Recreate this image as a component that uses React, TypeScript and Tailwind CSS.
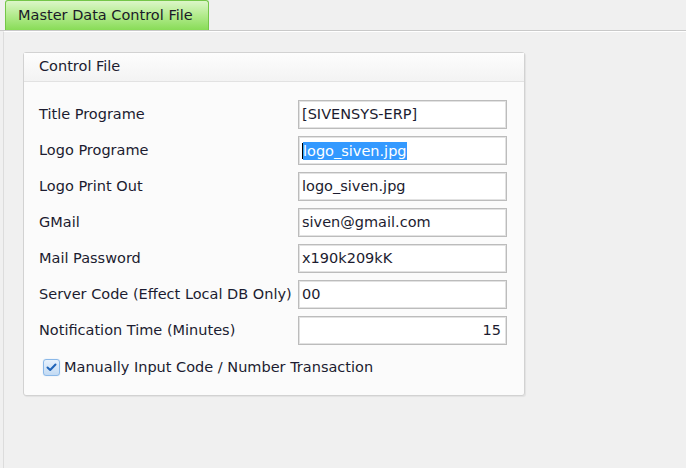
const FONT = "font-['DejaVu_Sans',Tahoma,sans-serif]";

type Row = { label: string; value: string; align?: 'right'; selected?: boolean };

const ROWS: Row[] = [
  { label: 'Title Programe', value: '[SIVENSYS-ERP]' },
  { label: 'Logo Programe', value: 'logo_siven.jpg', selected: true },
  { label: 'Logo Print Out', value: 'logo_siven.jpg' },
  { label: 'GMail', value: 'siven@gmail.com' },
  { label: 'Mail Password', value: 'x190k209kK' },
  { label: 'Server Code (Effect Local DB Only)', value: '00' },
  { label: 'Notification Time (Minutes)', value: '15', align: 'right' },
];

function Field({ row }: { row: Row }) {
  return (
    <div
      className={`w-[209px] h-[29px] bg-white border border-[#bcbcbc] shadow-[inset_0_0_0_1px_#e2e2e2] flex items-center px-[3px] text-[14.5px] text-[#1c1c30] ${
        row.align === 'right' ? 'justify-end pr-[5px]' : ''
      }`}
    >
      {row.selected ? (
        <span className="flex items-center">
          <span className="w-px h-[16px] bg-black" />
          <span className="bg-[#3399ff] text-white leading-[18px]">{row.value}</span>
        </span>
      ) : (
        <span>{row.value}</span>
      )}
    </div>
  );
}

export default function App() {
  return (
    <div className={`w-[686px] h-[468px] bg-[#f0f0f0] overflow-hidden ${FONT} text-[#1c1c30]`}>
      {/* tab strip */}
      <div className="h-[31px] flex items-end pl-[5px] border-b border-[#c9c9c9]">
        <div className="w-[204px] h-[30px] rounded-t-[3px] border border-b-0 border-[#74c648] bg-gradient-to-b from-[#dcf6c8] via-[#b2eb8c] to-[#88dc56] flex items-center pl-[12px] text-[14.5px] text-[#1a1a28]">
          Master Data Control File
        </div>
      </div>

      {/* page */}
      <div className="ml-[3px] h-[437px] border-l border-t border-[#dcdcdc] border-t-white pl-[19px] pt-[20px]">
        <div className="w-[502px] h-[344px] rounded-[3px] border border-[#d2d2d2] bg-[#fbfbfb] shadow-[1px_1px_1px_rgba(0,0,0,0.06)] flex flex-col">
          <div className="h-[29px] flex items-center pl-[15px] text-[14.5px] bg-gradient-to-b from-[#fdfdfd] to-[#f3f3f3] border-b border-[#e2e2e2]">
            Control File
          </div>
          <div className="flex flex-col gap-[7px] pt-[18px] pl-[15px]">
            {ROWS.map((r) => (
              <div key={r.label} className="flex items-center h-[29px]">
                <div className="w-[259px] text-[14.5px] whitespace-nowrap">{r.label}</div>
                <Field row={r} />
              </div>
            ))}
            <div className="flex items-center gap-[4px] mt-[5px] pl-[4px]">
              <div className="w-[17px] h-[17px] rounded-[3px] border border-[#8ab8e8] bg-gradient-to-b from-[#e8f2fd] to-[#c2daf3] shadow-[0_0_1px_#a8cdf0] flex items-center justify-center">
                <svg width="11" height="9" viewBox="0 0 11 9">
                  <path d="M1.5 4.5 L4.2 7 L9.5 1.5" fill="none" stroke="#1f63b8" strokeWidth="2" strokeLinecap="round" strokeLinejoin="round" />
                </svg>
              </div>
              <span className="text-[14.5px]">Manually Input Code / Number Transaction</span>
            </div>
          </div>
        </div>
      </div>
    </div>
  );
}
